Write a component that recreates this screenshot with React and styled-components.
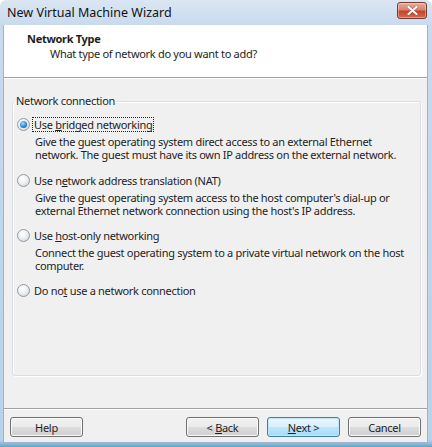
import React from "react"
import styled, { createGlobalStyle } from "styled-components"

const GlobalStyle = createGlobalStyle`
    html, body {
        margin: 0;
        padding: 0;
        background: #ffffff;
    }
    * {
        box-sizing: border-box;
    }
`

const Window = styled.div`
    width: 432px;
    height: 447px;
    display: flex;
    flex-direction: column;
    background: linear-gradient(180deg, #dbe6f3 0px, #c9daee 25px, #b9d1ea 440px, #5fa7c9 100%);
    border-radius: 6px 6px 0 0;
    font-family: "Noto Sans", "Open Sans", sans-serif;
    font-size: 11px;
    letter-spacing: -0.3px;
    color: #1e1e1e;
    overflow: hidden;
`

const TitleBar = styled.div`
    height: 25px;
    flex: none;
    display: flex;
    align-items: center;
    justify-content: space-between;
    padding: 0 5px 1px 7px;
`

const Title = styled.span`
    font-size: 12.5px;
    color: #111;
    letter-spacing: 0;
`

const CloseButton = styled.div`
    width: 30px;
    height: 17px;
    margin-top: -3px;
    border: 1px solid #6f3b33;
    border-radius: 3px;
    background: linear-gradient(180deg, #eaa99b 0%, #d9826f 45%, #c2452c 55%, #d46a4d 100%);
    box-shadow: inset 0 0 0 1px rgba(255,255,255,0.35);
    display: flex;
    align-items: center;
    justify-content: center;
`

const Client = styled.div`
    flex: 1;
    margin: 0 4px 4px 3px;
    display: flex;
    flex-direction: column;
    background: #f0f0f0;
    border: 1px solid #9fb4cc;
    border-top: none;
`

const Header = styled.div`
    height: 53px;
    flex: none;
    background: #ffffff;
    border-bottom: 1px solid #a0a0a0;
    box-shadow: 0 1px 0 #ffffff;
    padding: 6px 0 0 23px;
`

const HeaderTitle = styled.div`
    font-weight: bold;
    font-size: 11px;
    line-height: 15px;
`

const HeaderSub = styled.div`
    padding-left: 23px;
    line-height: 16px;
`

const Body = styled.div`
    flex: 1;
    padding: 16px 6px 0 8px;
`

const Group = styled.fieldset`
    margin: 0;
    height: 282px;
    border: 1px solid #d5dfe5;
    border-radius: 3px;
    box-shadow: inset 1px 1px 0 #ffffff, 1px 1px 0 #ffffff;
    padding: 9px 0 0 4px;
`

const Legend = styled.legend`
    padding: 0 2px;
    margin-left: -3px;
    line-height: 14px;
`

const Option = styled.div`
    margin-bottom: 11px;
    &:first-of-type {
        margin-bottom: 12px;
    }
`

const OptionRow = styled.div`
    display: flex;
    align-items: center;
    gap: 3px;
    height: 15px;
`

const Radio = styled.span`
    width: 13px;
    height: 13px;
    flex: none;
    border-radius: 50%;
    border: 1px solid #8f9aa5;
    background: radial-gradient(circle at 40% 35%, #ffffff 0%, #eef0f2 45%, #c9ced4 100%);
    display: flex;
    align-items: center;
    justify-content: center;
    &::after {
        content: "";
        display: ${p => (p.checked ? "block" : "none")};
        width: 7px;
        height: 7px;
        border-radius: 50%;
        background: radial-gradient(circle at 40% 35%, #9fe0ff 0%, #2a8ad4 55%, #0d4f92 100%);
    }
`

const Label = styled.span`
    padding: 0 1px;
    line-height: 13px;
    outline: ${p => (p.focused ? "1px dotted #222" : "none")};
    outline-offset: 0;
`

const Description = styled.div`
    padding-left: 18px;
    margin-top: 3px;
    line-height: 13px;
    max-width: 392px;
`

const Footer = styled.div`
    height: 34px;
    flex: none;
    border-top: 1px solid #a0a0a0;
    box-shadow: inset 0 1px 0 #ffffff;
    display: flex;
    align-items: center;
    padding: 3px 6px 0 6px;
`

const Button = styled.button`
    width: 73px;
    height: 20px;
    margin-left: ${p => p.gap || 0}px;
    font-family: inherit;
    font-size: 11px;
    letter-spacing: inherit;
    color: #1e1e1e;
    padding: 0;
    border-radius: 3px;
    border: 1px solid ${p => (p.primary ? "#3c7fb1" : "#707070")};
    background: ${p => p.primary
        ? "linear-gradient(180deg, #eaf6fd 0%, #d9f0fc 50%, #bee6fd 51%, #a7d9f5 100%)"
        : "linear-gradient(180deg, #f2f2f2 0%, #ebebeb 50%, #dddddd 51%, #cfcfcf 100%)"};
    box-shadow: inset 0 0 0 1px ${p => (p.primary ? "#bfe3f8" : "#fbfbfb")};
`

const Key = styled.span`
    text-decoration: underline;
`

const Spacer = styled.div`
    flex: 1;
`

const options = [
    {
        pre: "Use ", key: "b", post: "ridged networking",
        text: "Give the guest operating system direct access to an external Ethernet network. The guest must have its own IP address on the external network.",
        checked: true,
    },
    {
        pre: "Use n", key: "e", post: "twork address translation (NAT)",
        text: "Give the guest operating system access to the host computer's dial-up or external Ethernet network connection using the host's IP address.",
    },
    {
        pre: "Use ", key: "h", post: "ost-only networking",
        text: "Connect the guest operating system to a private virtual network on the host computer.",
    },
    {
        pre: "Do no", key: "t", post: " use a network connection",
    },
]

export default function App() {
    return (
        <>
            <GlobalStyle />
            <Window>
                <TitleBar>
                    <Title>New Virtual Machine Wizard</Title>
                    <CloseButton>
                        <svg width="11" height="9" viewBox="0 0 11 9">
                            <path d="M1.5 1 L9.5 8 M9.5 1 L1.5 8" stroke="#5a1a12" strokeWidth="3.2" strokeLinecap="round" opacity="0.35" />
                            <path d="M1.5 1 L9.5 8 M9.5 1 L1.5 8" stroke="#ffffff" strokeWidth="2.2" strokeLinecap="round" />
                        </svg>
                    </CloseButton>
                </TitleBar>
                <Client>
                    <Header>
                        <HeaderTitle>Network Type</HeaderTitle>
                        <HeaderSub>What type of network do you want to add?</HeaderSub>
                    </Header>
                    <Body>
                        <Group>
                            <Legend>Network connection</Legend>
                            {options.map((o, i) => (
                                <Option key={i}>
                                    <OptionRow>
                                        <Radio checked={o.checked} />
                                        <Label focused={o.checked}>
                                            {o.pre}<Key>{o.key}</Key>{o.post}
                                        </Label>
                                    </OptionRow>
                                    {o.text && <Description>{o.text}</Description>}
                                </Option>
                            ))}
                        </Group>
                    </Body>
                    <Footer>
                        <Button>Help</Button>
                        <Spacer />
                        <Button>&lt; <Key>B</Key>ack</Button>
                        <Button gap={8} primary><Key>N</Key>ext &gt;</Button>
                        <Button gap={8}>Cancel</Button>
                    </Footer>
                </Client>
            </Window>
        </>
    )
}
